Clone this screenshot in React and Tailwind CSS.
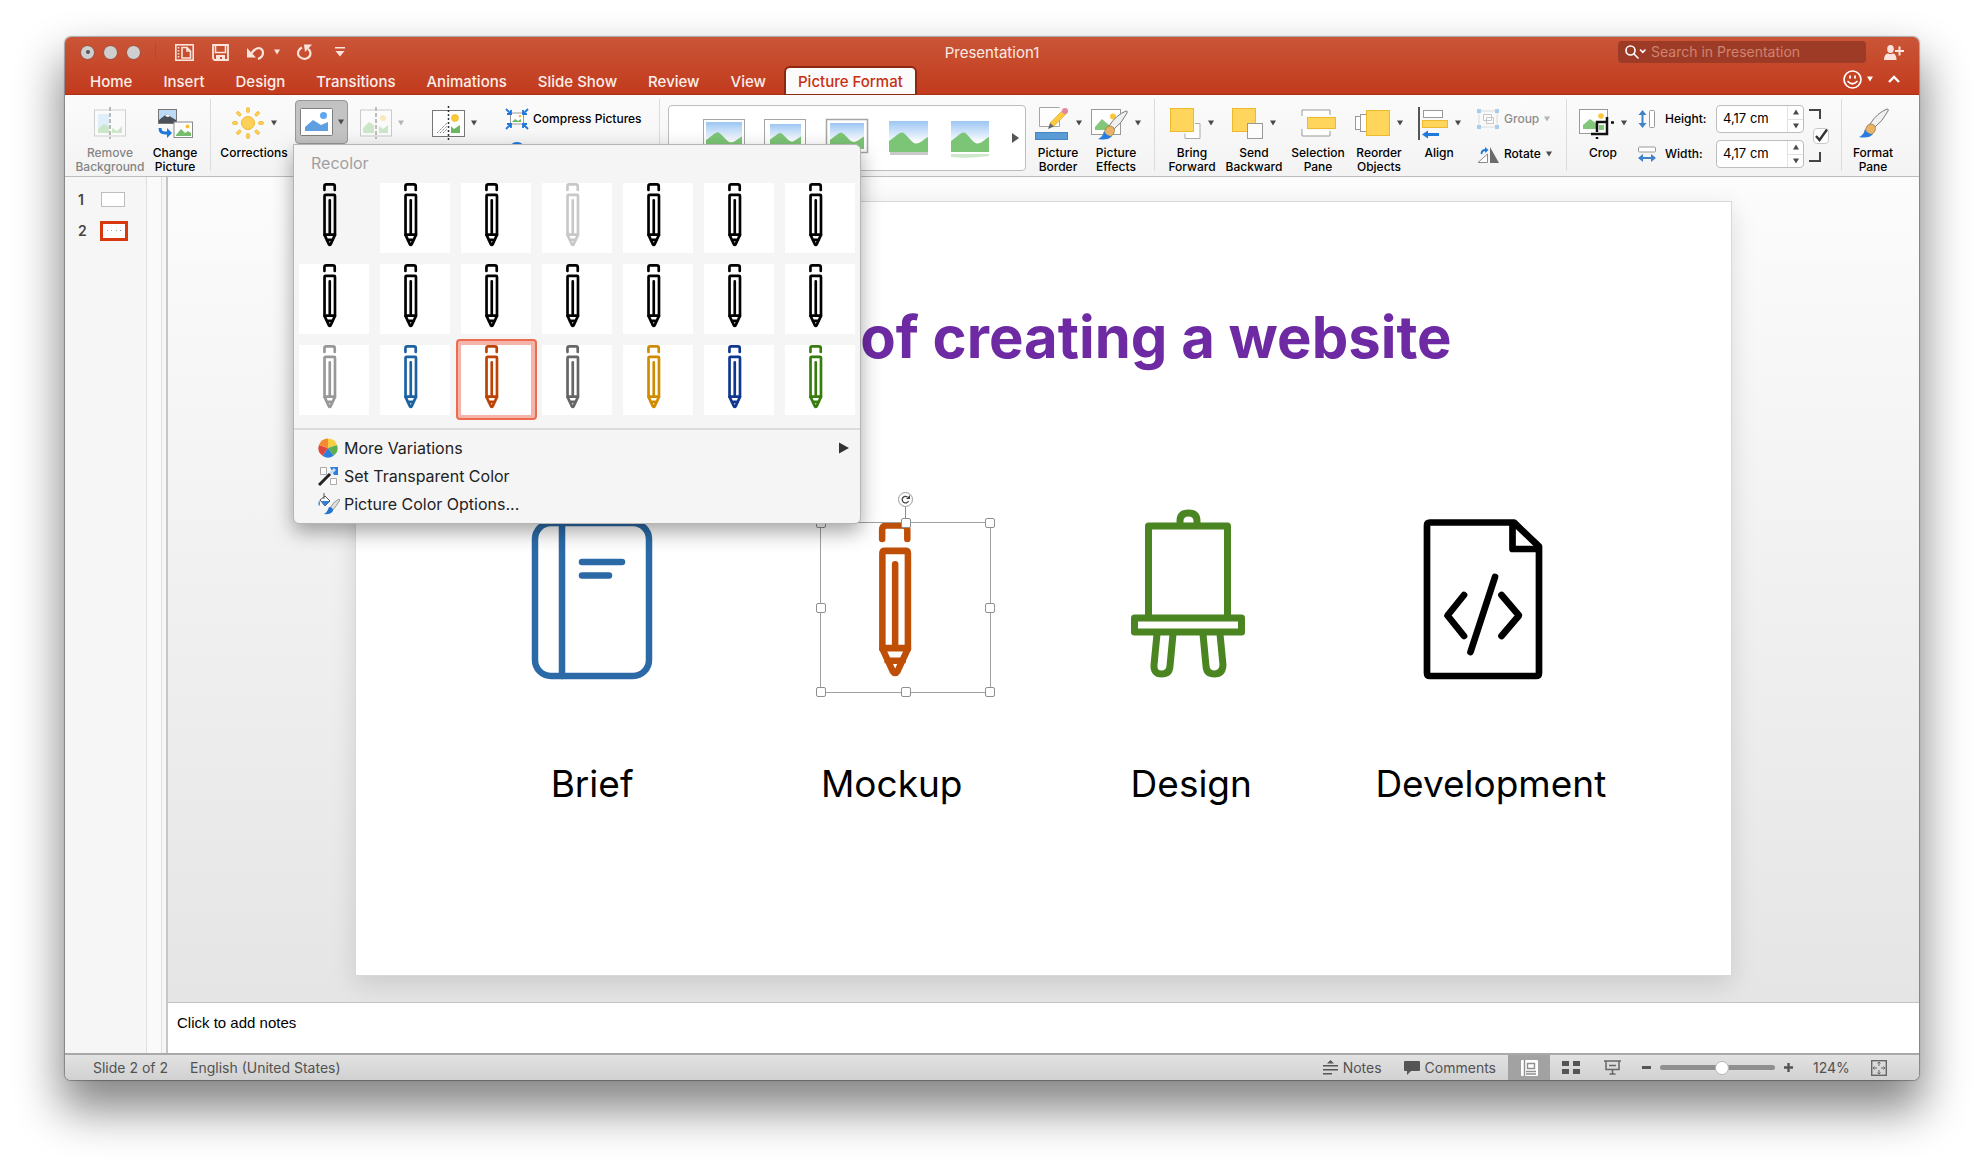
import { useState } from 'react';
import clsx from 'clsx';

const tabs = ['Home', 'Insert', 'Design', 'Transitions', 'Animations', 'Slide Show', 'Review', 'View', 'Picture Format'];

const swatches = [
  'text-black', 'text-black', 'text-black', 'text-[#c8c8c8]', 'text-black', 'text-black', 'text-black',
  'text-black', 'text-black', 'text-black', 'text-black', 'text-black', 'text-black', 'text-black',
  'text-[#989898]', 'text-[#1c62a0]', 'text-[#bc4206]', 'text-[#666666]', 'text-[#cf8c00]', 'text-[#0f378f]', 'text-[#377d0e]',
];

function Caret({ className = 'text-[#4a4a4a]' }) {
  return (
    <svg width="6" height="6" viewBox="0 0 6 6" className={clsx('shrink-0', className)}>
      <path d="M0 0.5h6L3 5.5z" fill="currentColor" />
    </svg>
  );
}

function Divider({ className }) {
  return <div className={clsx('w-px h-[72px] mt-1 bg-[#dcdcdc] shrink-0', className)} />;
}

function BigButton({ icon, label, caret, disabled, className }) {
  return (
    <button disabled={disabled} className={clsx('flex flex-col items-center shrink-0', className)}>
      <span className="flex items-center gap-[7px] h-11">
        {icon}
        {caret && <Caret />}
      </span>
      <span className={clsx('pt-px text-xs leading-[14px] font-medium whitespace-pre', disabled ? 'text-[#858585]' : 'text-black')}>
        {label}
      </span>
    </button>
  );
}

function PencilDrawing({ className }) {
  return (
    <svg viewBox="0 0 170 170" className={className} fill="none" stroke="currentColor" strokeWidth="6.5" strokeLinecap="round" strokeLinejoin="round">
      <path d="M61.8 17V8q0-4.6 4.6-4.6h15.8q4.6 0 4.6 4.6v9" />
      <path d="M62 126V31q0-2.3 2.3-2.3h20.8q2.3 0 2.3 2.3v95M62 125.4h25.4M74.7 42v83" />
      <path d="M62 126l10.4 22.5q2.3 3.4 4.6 0L87.4 126M67 138h15.4" />
    </svg>
  );
}

function Mountains({ x, y, w, h, sky = '#fff' }) {
  return (
    <svg x={x} y={y} width={w} height={h} viewBox="0 0 38 31" preserveAspectRatio="none">
      <rect width="38" height="31" fill={sky} />
      <path d="M0 20C6 16 10 11 13 11.5S22 22 26 22.5 34 18 38 16v15H0z" fill="#7cc576" />
    </svg>
  );
}

const RemoveBgIcon = () => (
  <svg width="32" height="32" viewBox="0 0 32 32">
    <rect x="0.5" y="3" width="31" height="26" fill="#fafafa" stroke="#cfcfcf" />
    <path d="M4 7h11v18H4z" fill="#e0eefb" />
    <path d="M4 22l6-5 5 3v6H4zM18 21l5 3 5-5v7H18z" fill="#cbe6c8" />
    <path d="M16 0v32" stroke="#b9b9b9" strokeWidth="2" strokeDasharray="4 2" />
  </svg>
);

const ChangePicIcon = () => (
  <svg width="35" height="31" viewBox="0 0 35 31">
    <rect x="0.5" y="1.5" width="18" height="14" fill="#bcd9f5" stroke="#777" />
    <path d="M1 12l5-4 3-2 4 3 5 3v3H1z" fill="#4a505a" />
    <path d="M7 8l2-2 3 2-2 1z" fill="#fff" />
    <rect x="16" y="14" width="18.500" height="15.500" fill="#fff" stroke="#8a8a8a" />
    <path d="M18 27l5-6 4 4 3-2 3 2v3H18z" fill="#76bd6c" />
    <circle cx="29.500" cy="18.500" r="2" fill="#f6c22d" />
    <path d="M2 20q0 5 5 5h3" fill="none" stroke="#1f78dc" strokeWidth="3" />
    <path d="M9 20l5 5-5 5z" fill="#1f78dc" />
  </svg>
);

const SunIcon = () => (
  <svg width="32" height="32" viewBox="0 0 32 32">
    <circle cx="16" cy="16" r="6.500" fill="#fdd159" stroke="#eeb72c" />
    {[0, 45, 90, 135, 180, 225, 270, 315].map((a) => (
      <rect key={a} x="14.500" y="0.500" width="3" height="5" rx="1.500" fill="#fdd159" stroke="#eeb72c" strokeWidth="0.800" transform={`rotate(${a} 16 16)`} />
    ))}
  </svg>
);

const ColorIcon = () => (
  <svg width="33" height="28" viewBox="0 0 33 28">
    <rect x="0.5" y="0.5" width="32" height="27" rx="1" fill="#fff" stroke="#7d7d7d" />
    <path d="M5 23v-4l8-7 8 5 7-3v9z" fill="#5e9fe2" />
    <circle cx="23.500" cy="7.500" r="3.500" fill="#5fa7f2" />
  </svg>
);

const ArtisticIcon = () => (
  <svg width="32" height="34" viewBox="0 0 32 34" opacity="0.4">
    <rect x="0.5" y="4" width="31" height="26" fill="#fff" stroke="#888" />
    <path d="M3 27v-5l6-6 5 3v8zM19 20l4 3 5-4v8h-9z" fill="#8fcc88" />
    <circle cx="23" cy="12" r="3" fill="#fbd466" />
    <path d="M16 1v32" stroke="#666" strokeWidth="2" strokeDasharray="4 2" />
  </svg>
);

const TransparencyIcon = () => (
  <svg width="33" height="35" viewBox="0 0 33 35">
    <rect x="0.5" y="4.500" width="32" height="26" fill="#fff" stroke="#777" />
    <path d="M5 27l10-10M8 27l7-7M11 27l4-4" stroke="#777" strokeWidth="0.900" strokeDasharray="1.500 0.700" />
    <path d="M19 20l3 3 6-4v8h-9z" fill="#6db763" />
    <circle cx="23" cy="12" r="3.500" fill="#fcc934" stroke="#e8b021" strokeWidth="0.600" />
    <path d="M16.500 0v35" stroke="#333" strokeWidth="1.500" strokeDasharray="2 2" />
  </svg>
);

const CompressIcon = () => (
  <svg width="24" height="22" viewBox="0 0 24 22">
    <rect x="5.500" y="5" width="13" height="11" fill="#fff" stroke="#9a9a9a" />
    <path d="M7 14l3-3 3 2 3-2v3z" fill="#6db763" />
    <circle cx="15" cy="8" r="1.300" fill="#f6b92d" />
    <g stroke="#1f78dc" strokeWidth="1.800" fill="none">
      <path d="M1 1l5 5M6 2v4H2M23 1l-5 5M18 2v4h4M1 21l5-5M6 20v-4H2M23 21l-5-5M18 20v-4h4" />
    </g>
  </svg>
);

const BorderIcon = () => (
  <svg width="34" height="34" viewBox="0 0 34 34">
    <path d="M24.500 12v8.500h-20v-19h20" fill="#fdfdfd" stroke="#a5a5a5" />
    <path d="M15 17L28 4l4 3-13 13z" fill="#fdc93f" stroke="#d9a523" strokeWidth="0.600" />
    <path d="M15 17l4 3.500-6 2.500z" fill="#666" />
    <circle cx="30" cy="5" r="3" fill="#e287a0" />
    <rect x="0.500" y="26.500" width="32" height="7" fill="#5b9bd5" stroke="#4585c2" />
  </svg>
);

const Brush = () => (
  <g>
    <path d="M18 20Q25 9 35 5q2 0 1 2-5 10-14 17z" fill="#f0f0f0" stroke="#7b7b7b" />
    <path d="M15 22q4-4 8 0 2 5-4 9-5 0-6-4z" fill="#e6b368" stroke="#a97a38" strokeWidth="0.800" />
    <path d="M13 25q2 5 8 5-4 5-14 3 5-2 6-8z" fill="#2a7de0" />
  </g>
);

const EffectsIcon = () => (
  <svg width="37" height="35" viewBox="0 0 37 35">
    <rect x="0.500" y="3.500" width="29" height="25" fill="#fff" stroke="#9a9a9a" />
    <path d="M4 24v-3l7-8 8 7-3 4z" fill="#83c77b" />
    <circle cx="22" cy="10.500" r="3" fill="#fbc63a" />
    <Brush />
  </svg>
);

const FormatIcon = () => (
  <svg width="33" height="32" viewBox="5 3 33 32">
    <Brush />
  </svg>
);

const ForwardIcon = () => (
  <svg width="31" height="31" viewBox="0 0 31 31">
    <path d="M25 15.500h5v15H15v-5" fill="#fff" stroke="#aaa" />
    <rect x="0.500" y="0.500" width="23" height="23" fill="#ffd55c" stroke="#edb92e" />
  </svg>
);

const BackwardIcon = () => (
  <svg width="31" height="31" viewBox="0 0 31 31">
    <rect x="0.500" y="0.500" width="23" height="23" fill="#ffd55c" stroke="#edb92e" />
    <rect x="15.500" y="15.500" width="15" height="15" fill="#fcfcfc" stroke="#999" />
  </svg>
);

const SelectionIcon = () => (
  <svg width="35" height="28" viewBox="0 0 35 28">
    <path d="M1 7V1h28v5M1 20v7h28v-5" fill="#fff" stroke="#999" />
    <rect x="6.500" y="8.500" width="28" height="11" fill="#ffd55c" stroke="#edb92e" />
  </svg>
);

const ReorderIcon = () => (
  <svg width="35" height="28" viewBox="0 0 35 28">
    <rect x="0.500" y="7.500" width="9" height="13" fill="#fff" stroke="#999" />
    <rect x="5.500" y="5.500" width="9" height="17" fill="#fff" stroke="#999" />
    <rect x="11.500" y="1.500" width="23" height="25" fill="#ffd55c" stroke="#edb92e" />
  </svg>
);

const AlignIcon = () => (
  <svg width="30" height="33" viewBox="0 0 30 33">
    <path d="M1 0v33" stroke="#555" strokeWidth="2" />
    <rect x="5.500" y="3.500" width="19" height="7" fill="#fff" stroke="#999" />
    <rect x="4.500" y="13.500" width="25" height="7" fill="#ffd55c" stroke="#edb92e" />
    <path d="M4 27.500l6-4v2.500h11v3H10v2.500z" fill="#1f78dc" />
  </svg>
);

const GroupIcon = () => (
  <svg width="22" height="20" viewBox="0 0 22 20">
    <path d="M2 2h18v16H2z" fill="none" stroke="#dcdcdc" />
    <path d="M6.500 5.500h8v6h-8zM9.500 8.500h7v6h-7z" fill="#fff" fillOpacity="0.500" stroke="#c6c6c6" />
    <path d="M0 0h4v4H0zM18 0h4v4h-4zM0 16h4v4H0zM18 16h4v4h-4z" fill="#a9cbf0" />
  </svg>
);

const RotateIcon = () => (
  <svg width="22" height="17" viewBox="0 0 22 17">
    <path d="M10.500 8v8.500H1z" fill="#fff" stroke="#8a8a8a" />
    <path d="M13 1l9 16h-9z" fill="#6b6b6b" />
    <path d="M4.500 8q0-4 4-4" fill="none" stroke="#1f78dc" strokeWidth="1.800" />
    <path d="M8 1l3.500 3L8 7z" fill="#1f78dc" />
  </svg>
);

const CropIcon = () => (
  <svg width="35" height="31" viewBox="0 0 35 31">
    <rect x="0.500" y="1.500" width="28" height="24" fill="#fff" stroke="#9a9a9a" />
    <path d="M4 21v-4l7-6 6 4v6z" fill="#83c77b" />
    <circle cx="22" cy="8" r="2.800" fill="#fbc63a" />
    <path d="M20 17h5v5h-5z" fill="#83c77b" />
    <path d="M28 9v17H12M18 24V14h10M32 14.500h3M18 29v2" fill="none" stroke="#111" strokeWidth="2.500" />
  </svg>
);

const HeightIcon = () => (
  <svg width="18" height="18" viewBox="0 0 18 18">
    <path d="M4.500 4v10" stroke="#3f82c7" strokeWidth="2" />
    <path d="M0.500 5l4-5 4 5zM0.500 13l4 5 4-5z" fill="#3f82c7" />
    <rect x="11.500" y="0.500" width="5" height="17" rx="1" fill="#fff" stroke="#9a9a9a" />
  </svg>
);

const WidthIcon = () => (
  <svg width="18" height="18" viewBox="0 0 18 18">
    <rect x="0.500" y="2" width="17" height="5" rx="1" fill="#fff" stroke="#9a9a9a" />
    <path d="M4 13h10" stroke="#3f82c7" strokeWidth="2" />
    <path d="M5 9v8l-5-4zM13 9v8l5-4z" fill="#3f82c7" />
  </svg>
);

function SizeField({ id, label, icon }) {
  return (
    <div className="flex items-center h-7">
      {icon}
      <label htmlFor={id} className="w-[51px] ml-[9px] text-xs font-medium">{label}</label>
      <div className="flex w-[88px] h-7 bg-white border border-[#bdbdbd] rounded overflow-hidden">
        <input id={id} defaultValue="4,17 cm" className="w-[70px] pl-[6px] text-[13px] outline-none" />
        <div className="flex flex-col flex-1 border-l border-[#e2e2e2]">
          <button aria-label={`Increase ${label}`} className="flex flex-1 items-center justify-center border-b border-[#e2e2e2]">
            <Caret className="text-[#4a4a4a] rotate-180" />
          </button>
          <button aria-label={`Decrease ${label}`} className="flex flex-1 items-center justify-center">
            <Caret />
          </button>
        </div>
      </div>
    </div>
  );
}

function TitleBar() {
  return (
    <div className="grid grid-cols-[1fr_auto_1fr] items-center h-[30px]">
      <div className="flex items-center pl-[15px] text-[#fbe4dc]">
        <div className="flex gap-2">
          <button aria-label="Close" className="flex items-center justify-center size-[15px] rounded-full bg-[#cfcfcf] border border-[#9c4a35]">
            <span className="size-1 rounded-full bg-[#555]" />
          </button>
          <button aria-label="Minimize" className="size-[15px] rounded-full bg-[#cfcfcf] border border-[#9c4a35]" />
          <button aria-label="Zoom" className="size-[15px] rounded-full bg-[#cfcfcf] border border-[#9c4a35]" />
        </div>
        <div className="w-px h-[18px] ml-[14px] bg-[#b64a2e]" />
        <button aria-label="Layout" className="ml-[19px]">
          <svg width="19" height="17" viewBox="0 0 19 17" fill="none" stroke="currentColor" strokeWidth="1.600">
            <rect x="0.800" y="0.800" width="17.400" height="15.400" />
            <path d="M7 3.500h5l3.500 3.500v7H7zM12 3v4h4" />
            <path d="M3.500 3v11" strokeDasharray="1.500 1.500" />
          </svg>
        </button>
        <button aria-label="Save" className="ml-[18px]">
          <svg width="17" height="17" viewBox="0 0 17 17">
            <path d="M1 1h15v15H2.500L1 14.500z" fill="none" stroke="currentColor" strokeWidth="1.800" />
            <path d="M3.500 1v7.500h10V1" fill="none" stroke="currentColor" strokeWidth="1.600" />
            <path d="M4 11h9v5h-3v-3H8v3H4z" fill="currentColor" />
          </svg>
        </button>
        <button aria-label="Undo" className="ml-[17px]">
          <svg width="19" height="15" viewBox="0 0 19 15">
            <path d="M5 9q4-6 8-6 4 1 4 5t-5 6" fill="none" stroke="currentColor" strokeWidth="2.200" />
            <path d="M1 3v9.500h9z" fill="currentColor" />
          </svg>
        </button>
        <Caret className="ml-[9px] text-[#fbe4dc]" />
        <button aria-label="Redo" className="ml-[17px]">
          <svg width="16" height="16" viewBox="0 0 16 16">
            <path d="M5 3.500q-4 2-4 6t6.500 5.500q6-1 6-6-.5-3-2.500-4" fill="none" stroke="currentColor" strokeWidth="2.200" />
            <path d="M7 0.500h8L8 8z" fill="currentColor" />
          </svg>
        </button>
        <button aria-label="Customize toolbar" className="ml-[22px]">
          <svg width="10" height="10" viewBox="0 0 10 10" fill="currentColor">
            <path d="M0 0h10v1.600H0zM0.500 4h9L5 9.500z" />
          </svg>
        </button>
      </div>
      <h1 className="pt-[2px] text-[15px] text-[#fbeae4]">Presentation1</h1>
      <div className="flex items-center justify-end pr-[15px] text-white">
        <label className="flex items-center w-[248px] h-[22px] pl-[7px] rounded bg-[#9e3b26]">
          <svg width="21" height="14" viewBox="0 0 21 14" fill="none" stroke="currentColor" strokeWidth="1.600" strokeLinecap="round">
            <circle cx="5.500" cy="5.500" r="4.500" />
            <path d="M9 9l4 4M15.500 5l2.300 2.300L20 5" />
          </svg>
          <input aria-label="Search" placeholder="Search in Presentation" className="flex-1 min-w-0 ml-[5px] text-sm bg-transparent outline-none placeholder:text-[#cf8370]" />
        </label>
        <button aria-label="Share" className="ml-[18px] text-[#fbe4dc]">
          <svg width="20" height="15" viewBox="0 0 20 15" fill="currentColor">
            <ellipse cx="6.500" cy="4" rx="3.300" ry="4" />
            <path d="M0 15q0-6 4-6.500 2.500 1.500 5 0 3.500 .5 3.500 6.500z" />
            <path d="M14.500 1.500h2v3.500H20v2h-3.500v3.500h-2V7H11V5h3.500z" />
          </svg>
        </button>
      </div>
    </div>
  );
}

function TabStrip({ active, onSelect }) {
  return (
    <div className="flex items-end justify-between h-[27px]">
      <nav className="flex items-end gap-px pl-[10px]">
        {tabs.map((t) => (
          <button
            key={t}
            onClick={() => onSelect(t)}
            className={clsx(
              'h-[26px] text-[15px] font-medium leading-7',
              t === active
                ? 'ml-1 px-3 rounded-t bg-[#fbfbfb] text-[#c9300f] shadow-[0_0_0_2px_#8d2810]'
                : 'px-[15px] text-[#fdeee9]'
            )}
          >
            {t}
          </button>
        ))}
      </nav>
      <div className="flex items-center h-[30px] pr-[19px] text-white">
        <button aria-label="Feedback" className="flex items-center gap-[5px]">
          <svg width="19" height="19" viewBox="0 0 19 19" fill="none" stroke="currentColor" strokeWidth="1.700" strokeLinecap="round">
            <circle cx="9.500" cy="9.500" r="8.500" />
            <path d="M7 6v2M12 6v2M5 11.500q4.500 4.500 9 0" />
          </svg>
          <Caret className="text-white" />
        </button>
        <button aria-label="Collapse ribbon" className="ml-[15px]">
          <svg width="12" height="8" viewBox="0 0 12 8" fill="none" stroke="currentColor" strokeWidth="2.400">
            <path d="M1 7l5-5 5 5" />
          </svg>
        </button>
      </div>
    </div>
  );
}

function RecolorMenu({ picked, onPick }) {
  return (
    <div className="absolute z-20 -left-[2px] top-11 w-[568px] pb-[5px] rounded-b-md rounded-tr-md bg-[#f5f5f5] border border-[#b5b5b5] shadow-[0_8px_20px_rgba(0,0,0,0.35)] text-left">
      <h2 className="pt-2 pl-[17px] text-base leading-5 text-[#a0a0a0]">Recolor</h2>
      <div className="grid grid-cols-7 mt-1 border-b-2 border-[#dcdcdc] pb-2">
        {swatches.map((color, i) => (
          <button
            key={i}
            aria-label={`Recolor ${i + 1}`}
            onClick={() => onPick(i)}
            className={clsx(
              'flex items-center justify-center h-[81px] rounded border-2',
              picked === i ? 'bg-[#f3b4aa] border-[#ec6c52]' : 'border-transparent'
            )}
          >
            <span className={clsx('size-[70px]', i > 0 && 'bg-white')}>
              <PencilDrawing className={clsx('size-[70px]', color)} />
            </span>
          </button>
        ))}
      </div>
      <div className="pt-1 text-base text-[#222]">
        <button className="flex items-center w-full h-7 pl-6 pr-[11px]">
          <svg width="20" height="20" viewBox="0 0 20 20">
            <path d="M10 10V0.500A9.500 9.500 0 0 1 19 7z" fill="#f9ce3f" />
            <path d="M10 10l9-3a9.500 9.500 0 0 1-3.400 10.700z" fill="#5cb04f" />
            <path d="M10 10l5.600 7.700a9.500 9.500 0 0 1-11.200 0z" fill="#2e7fdb" />
            <path d="M10 10l-5.600 7.700A9.500 9.500 0 0 1 1 7z" fill="#e0453a" />
            <path d="M10 10L1 7a9.500 9.500 0 0 1 9-6.500z" fill="#f5892f" />
          </svg>
          <span className="ml-[6px]">More Variations</span>
          <svg width="10" height="12" viewBox="0 0 10 12" className="ml-auto">
            <path d="M0 0.500v11L10 6z" fill="#333" />
          </svg>
        </button>
        <button className="flex items-center w-full h-7 pl-6">
          <svg width="20" height="20" viewBox="0 0 20 20">
            <path d="M2.500 1.500h6v7h-6zM12.500 12.500h6v6h-6z" fill="#fff" stroke="#aaa" />
            <path d="M12 1h8v8h-4z" fill="#2e7fdb" />
            <path d="M10 10l7-7" stroke="#c8dcf0" strokeWidth="3" />
            <path d="M1 19L12 8" stroke="#222" strokeWidth="3" />
          </svg>
          <span className="ml-[6px]">Set Transparent Color</span>
        </button>
        <button className="flex items-center w-full h-7 pl-6">
          <svg width="22" height="22" viewBox="0 0 22 22">
            <path d="M2 7l5-4 5 5-5 5z" fill="#fff" stroke="#555" />
            <path d="M3 8h9l-5 5zM1 7q-1 5 0 6 2-2 0-6z" fill="#2e7fdb" />
            <path d="M6 0v6" stroke="#555" />
            <path d="M12 15q4-7 9-9l1 1q-3 5-7 10z" fill="#ddd" stroke="#888" strokeWidth="0.800" />
            <path d="M11 14q4 0 4 4-3 4-9 3 3-1 5-7z" fill="#2573d0" />
          </svg>
          <span className="ml-1">Picture Color Options...</span>
        </button>
      </div>
    </div>
  );
}

function StyleGallery() {
  return (
    <div className="flex flex-1 items-center h-[66px] mt-[10px] ml-2 pl-[34px] pr-[6px] bg-white border border-[#bdbdbd] rounded overflow-hidden">
      <svg width="288" height="40" viewBox="0 0 288 40" className="shrink-0">
        <defs>
          <linearGradient id="sky" x1="0" y1="0" x2="0" y2="1">
            <stop offset="0" stopColor="#9cc6f3" />
            <stop offset="0.700" stopColor="#ffffff" />
          </linearGradient>
        </defs>
        <rect x="0.500" y="1.500" width="41" height="33" fill="#fff" stroke="#a5a5a5" />
        <Mountains x="3" y="4" w="36" h="28" sky="url(#sky)" />
        <rect x="61.500" y="1.500" width="41" height="33" fill="#fff" stroke="#a5a5a5" />
        <Mountains x="67" y="6" w="31" h="24" sky="url(#sky)" />
        <rect x="123.500" y="1.500" width="41" height="33" fill="#fff" stroke="#a5a5a5" strokeWidth="1.500" />
        <Mountains x="127" y="5" w="34" h="26" sky="url(#sky)" />
        <rect x="187" y="32" width="38" height="5" fill="#c9c9c9" />
        <Mountains x="186" y="3" w="39" h="31" sky="url(#sky)" />
        <Mountains x="248" y="3" w="38" h="31" sky="url(#sky)" />
        <path d="M248 36h38v2q-20 3-38 1z" fill="#cfe8cc" />
      </svg>
      <button aria-label="More styles" className="ml-auto">
        <svg width="7" height="10" viewBox="0 0 7 10">
          <path d="M0 0v10l7-5z" fill="#555" />
        </svg>
      </button>
    </div>
  );
}

function Ribbon() {
  const [picked, setPicked] = useState(16);
  return (
    <div className="flex items-start h-[82px] pl-[7px] pr-[22px] bg-linear-to-b from-[#fbfbfb] to-[#f3f3f3] border-b border-[#bcbcbc]">
      <BigButton disabled icon={<RemoveBgIcon />} label={'Remove\nBackground'} className="w-[76px] mt-[6px]" />
      <BigButton icon={<ChangePicIcon />} label={'Change\nPicture'} className="w-[54px] mt-[6px]" />
      <Divider className="ml-2" />
      <BigButton caret icon={<SunIcon />} label="Corrections" className="w-[70px] ml-2 mt-[6px]" />
      <div className="relative ml-[6px] mt-[5px] shrink-0">
        <button aria-label="Color" className="flex items-center gap-[5px] w-[53px] h-11 pl-1 rounded border border-[#979797] bg-[#c3c3c3]">
          <ColorIcon />
          <Caret />
        </button>
        <RecolorMenu picked={picked} onPick={setPicked} />
      </div>
      <button disabled aria-label="Artistic effects" className="flex items-center gap-[6px] h-11 mt-[6px] ml-3 shrink-0">
        <ArtisticIcon />
        <Caret className="text-[#b5b5b5]" />
      </button>
      <button aria-label="Transparency" className="flex items-center gap-[6px] h-11 mt-[6px] ml-7 shrink-0">
        <TransparencyIcon />
        <Caret />
      </button>
      <div className="flex flex-col gap-3 w-[142px] ml-7 mt-[13px] shrink-0">
        <button className="flex items-center gap-1 text-xs font-medium whitespace-nowrap">
          <CompressIcon />
          Compress Pictures
        </button>
        <button aria-label="Reset picture" className="ml-1 size-4 rounded-full bg-[#1f78dc]" />
      </div>
      <Divider className="ml-3" />
      <StyleGallery />
      <BigButton caret icon={<BorderIcon />} label={'Picture\nBorder'} className="w-12 ml-2 mt-[6px]" />
      <BigButton caret icon={<EffectsIcon />} label={'Picture\nEffects'} className="w-12 ml-[10px] mt-[6px]" />
      <Divider className="ml-[14px]" />
      <BigButton caret icon={<ForwardIcon />} label={'Bring\nForward'} className="w-14 ml-[9px] mt-[6px]" />
      <BigButton caret icon={<BackwardIcon />} label={'Send\nBackward'} className="w-[60px] ml-1 mt-[6px]" />
      <BigButton icon={<SelectionIcon />} label={'Selection\nPane'} className="w-[58px] ml-[5px] mt-[6px]" />
      <BigButton caret icon={<ReorderIcon />} label={'Reorder\nObjects'} className="w-[54px] ml-[5px] mt-[6px]" />
      <BigButton caret icon={<AlignIcon />} label="Align" className="w-12 ml-[9px] mt-[6px]" />
      <div className="flex flex-col gap-[7px] w-20 ml-[14px] mt-[10px] shrink-0 text-xs font-medium">
        <button disabled className="flex items-center gap-[5px] h-7 text-[#8d8d8d]">
          <GroupIcon />
          Group
          <Caret className="text-[#b5b5b5]" />
        </button>
        <button className="flex items-center gap-[5px] h-7">
          <RotateIcon />
          Rotate
          <Caret />
        </button>
      </div>
      <Divider className="ml-[9px]" />
      <BigButton caret icon={<CropIcon />} label="Crop" className="w-12 ml-3 mt-[6px]" />
      <div className="flex flex-col gap-[7px] ml-[11px] mt-[10px] shrink-0">
        <SizeField id="height" label="Height:" icon={<HeightIcon />} />
        <SizeField id="width" label="Width:" icon={<WidthIcon />} />
      </div>
      <div className="flex flex-col items-start justify-between h-[53px] ml-[5px] mt-[14px] shrink-0">
        <span className="w-3 h-[10px] border-t-2 border-r-2 border-[#444]" />
        <label className="relative flex ml-1">
          <input type="checkbox" defaultChecked aria-label="Lock aspect ratio" className="peer appearance-none size-4 rounded-sm border border-[#c9c9c9] bg-white" />
          <svg width="13" height="13" viewBox="0 0 13 13" className="absolute left-[2px] top-px invisible peer-checked:visible pointer-events-none">
            <path d="M1 7l3.500 4L12 0.500" fill="none" stroke="#333" strokeWidth="2.400" />
          </svg>
        </label>
        <span className="w-3 h-[10px] border-b-2 border-r-2 border-[#444]" />
      </div>
      <Divider className="ml-3" />
      <BigButton icon={<FormatIcon />} label={'Format\nPane'} className="w-12 ml-[7px] mt-[6px]" />
    </div>
  );
}

function SlidePanel() {
  return (
    <aside className="flex w-[103px] shrink-0 bg-[#f6f6f6] border-r-2 border-[#c6c6c6]">
      <ol className="flex-1 pt-[7px] border-r border-[#dedede]">
        <li className="flex items-center h-[31px] pl-[13px]">
          <span className="w-[23px] text-sm font-semibold text-[#444]">1</span>
          <span className="w-6 h-[15px] bg-white border border-[#bdbdbd]" />
        </li>
        <li className="flex items-center h-[31px] pl-[13px]">
          <span className="w-[22px] text-sm font-semibold text-[#444]">2</span>
          <span className="flex items-center justify-around w-7 h-5 px-[2px] bg-white border-[3px] border-[#d8380e]">
            <i className="size-px bg-[#9fb0d0]" />
            <i className="size-px bg-[#d59a80]" />
            <i className="size-px bg-[#94b880]" />
            <i className="size-px bg-[#888888]" />
          </span>
        </li>
      </ol>
      <div className="w-[15px] border-r border-[#dedede] bg-[#fafafa]" />
      <div className="w-1" />
    </aside>
  );
}

const handles = [
  '-left-[5px] -top-[5px]', 'left-[80px] -top-[5px]', '-right-[5px] -top-[5px]',
  '-left-[5px] top-[80px]', '-right-[5px] top-[80px]',
  '-left-[5px] -bottom-[5px]', 'left-[80px] -bottom-[5px]', '-right-[5px] -bottom-[5px]',
];

function Slide() {
  return (
    <section className="w-[78.6%] aspect-[1377/776] bg-white border border-[#d8d8d8] shadow-[0_8px_24px_rgba(0,0,0,0.12)]">
      <h2 className="pt-[99px] pr-[279px] text-right text-[58px] leading-[72px] font-bold text-[#6d2aa3]">
        of creating a website
      </h2>
      <div className="grid grid-cols-4 justify-items-center pl-[88px] pr-[100px] mt-[135px]">
        <svg width="170" height="184" viewBox="0 0 170 184" fill="none" stroke="#2b6aa6" strokeWidth="6.500" strokeLinecap="round">
          <rect x="27" y="15" width="114" height="153" rx="16" />
          <path d="M54 15v153M74 54h40M74 67.500h27" />
        </svg>
        <div className="relative ml-8 mt-[14px] size-[171px]">
          <PencilDrawing className="size-full text-[#bf4e07]" />
          <div className="absolute inset-0 border border-[#a0a0a0]">
            <span className="absolute left-[84px] -top-4 w-px h-4 bg-[#8a8a8a]" />
            <span className="absolute left-[77px] -top-[31px] flex items-center justify-center size-[15px] rounded-full bg-white border border-[#999]">
              <svg width="9" height="9" viewBox="0 0 9 9">
                <path d="M7.500 6A3.300 3.300 0 1 1 6.500 2" fill="none" stroke="#444" strokeWidth="1.300" />
                <path d="M5 4h4V0z" fill="#444" />
              </svg>
            </span>
            {handles.map((pos) => (
              <span key={pos} className={clsx('absolute size-[10px] rounded-xs bg-white border border-[#8f8f8f]', pos)} />
            ))}
          </div>
        </div>
        <svg width="170" height="184" viewBox="0 0 170 184" fill="none" stroke="#4a8522" strokeWidth="7" strokeLinejoin="round">
          <path d="M47.500 110V18h79v92" />
          <path d="M79 17v-4q0-8 8.500-8t8.500 8v4" />
          <rect x="33.500" y="110" width="107" height="14" />
          <path d="M56 126l-3 31q-.5 9 7.500 9t8.500-8l3-32M102 126l3 32q.5 8 8.500 8t8.500-9l-3-31" />
        </svg>
        <svg width="170" height="184" viewBox="0 0 170 184" fill="none" stroke="#000" strokeWidth="6.700" strokeLinecap="round" strokeLinejoin="round">
          <path d="M33 14.500h84l25 24V165q0 3-3 3H33q-3 0-3-3V17.500q0-3 3-3z" />
          <path d="M115.500 16v25H141" />
          <path d="M67 87L50.500 107.500 67 128M104.500 87L122 107.500l-17.500 20.500M98 69L73.500 144" />
        </svg>
      </div>
      <div className="grid grid-cols-4 pl-[86px] pr-[90px] mt-[67px] text-center text-[37px] leading-[48px] text-black">
        <p>Brief</p>
        <p>Mockup</p>
        <p>Design</p>
        <p>Development</p>
      </div>
    </section>
  );
}

function StatusBar() {
  return (
    <footer className="flex items-center h-[27px] pl-7 pr-8 border-t-2 border-[#a9a9a9] rounded-b-md bg-linear-to-b from-[#e2e2e2] to-[#d1d1d1] text-sm text-[#525252]">
      <span className="w-[97px]">Slide 2 of 2</span>
      <span>English (United States)</span>
      <button className="flex items-center gap-[5px] ml-auto">
        <svg width="15" height="15" viewBox="0 0 15 15" fill="#555">
          <path d="M7.500 0L11 3.500H4zM0 5h15v1.400H0zM0 9h15v1.400H0zM0 13h9v1.400H0z" />
        </svg>
        Notes
      </button>
      <button className="flex items-center gap-[5px] ml-[22px]">
        <svg width="16" height="14" viewBox="0 0 16 14" fill="#555">
          <path d="M0 1q0-1 1-1h14q1 0 1 1v8q0 1-1 1H7l-4 4v-4H1q-1 0-1-1z" />
        </svg>
        Comments
      </button>
      <button aria-label="Normal view" className="flex items-center justify-center w-[42px] h-[25px] ml-3 bg-[#a2a2a2]">
        <svg width="17" height="16" viewBox="0 0 17 16">
          <rect width="17" height="16" rx="1" fill="#fff" />
          <path d="M3.500 0v16M6.500 3.500h7v5h-7zM5 11.500h10M5 14h10" fill="none" stroke="#8f8f8f" strokeWidth="1.400" />
        </svg>
      </button>
      <button aria-label="Slide sorter" className="ml-3">
        <svg width="18" height="14" viewBox="0 0 18 14" fill="#555">
          <path d="M0 0h7v5H0zM11 0h7v5h-7zM0 8h7v5H0zM11 8h7v5h-7z" />
        </svg>
      </button>
      <button aria-label="Slide show" className="ml-6">
        <svg width="17" height="15" viewBox="0 0 17 15" fill="none" stroke="#666" strokeWidth="1.500">
          <path d="M0 1h17M2 1v8.500h13V1M5 5.500h7M8.500 9.500V14M5.500 14h6" />
        </svg>
      </button>
      <button aria-label="Zoom out" className="w-[9px] h-[3px] ml-[21px] bg-[#555]" />
      <input
        type="range"
        aria-label="Zoom"
        defaultValue="54"
        className="appearance-none w-[115px] h-[5px] mx-[9px] rounded-full bg-[#8f8f8f] [&::-webkit-slider-thumb]:appearance-none [&::-webkit-slider-thumb]:size-[14px] [&::-webkit-slider-thumb]:rounded-full [&::-webkit-slider-thumb]:bg-white [&::-webkit-slider-thumb]:border [&::-webkit-slider-thumb]:border-solid [&::-webkit-slider-thumb]:border-[#b5b5b5]"
      />
      <button aria-label="Zoom in">
        <svg width="9" height="9" viewBox="0 0 9 9" stroke="#555" strokeWidth="2.400">
          <path d="M0 4.500h9M4.500 0v9" />
        </svg>
      </button>
      <span className="w-[78px] pl-5">124%</span>
      <button aria-label="Fit slide to window">
        <svg width="16" height="16" viewBox="0 0 16 16" fill="none" stroke="#666">
          <rect x="0.700" y="0.700" width="14.600" height="14.600" strokeWidth="1.400" />
          <path d="M8 2v4M8 10v4M2 8h4M10 8h4" />
          <path d="M6.500 3.500L8 2l1.500 1.500M6.500 12.500L8 14l1.500-1.500M3.500 6.500L2 8l1.500 1.500M12.500 6.500L14 8l-1.500 1.500" />
        </svg>
      </button>
    </footer>
  );
}

export default function App() {
  const [tab, setTab] = useState('Picture Format');

  return (
    <div className="flex min-h-screen px-[65px] pt-[37px] pb-[93px] bg-white font-['Inter',sans-serif] overflow-hidden">
      <div className="flex flex-col flex-1 min-w-0 rounded-md shadow-[0_0_1px_1px_rgba(0,0,0,0.3),0_26px_46px_4px_rgba(0,0,0,0.48)]">
        <header className="rounded-t-md bg-linear-to-b from-[#ca5537] to-[#c23a1c] border-b border-[#a93217]">
          <TitleBar />
          <TabStrip active={tab} onSelect={setTab} />
        </header>
        <Ribbon />
        <div className="flex flex-1">
          <SlidePanel />
          <div className="flex flex-col flex-1 min-w-0">
            <main className="flex flex-1 items-center justify-center pb-[2px] bg-linear-to-b from-[#fcfcfc] to-[#e5e5e5]">
              <Slide />
            </main>
            <div className="h-[51px] pl-[9px] pt-[10px] bg-white border-t border-[#c3c3c3] text-[15px] leading-5 text-black font-['Liberation_Sans',sans-serif]">
              Click to add notes
            </div>
          </div>
        </div>
        <StatusBar />
      </div>
    </div>
  );
}
